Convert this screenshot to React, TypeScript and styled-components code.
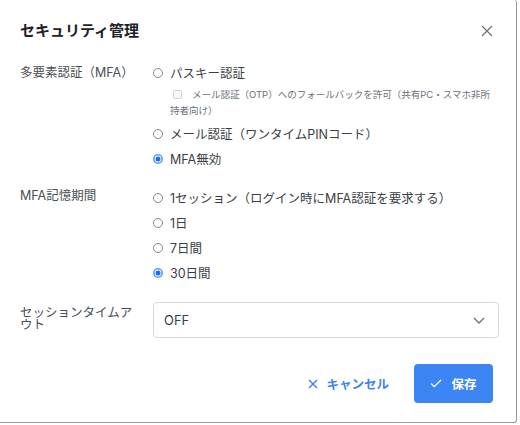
import React, { useState } from 'react'
import styled, { createGlobalStyle } from 'styled-components'

const Colors = {
  title: '#1f2328',
  label: '#4a4f57',
  text: '#3a3f47',
  muted: '#6b7079',
  primary: '#3d85f5',
  border: '#d6d9de',
  frame: '#9a9a9a'
}

const FontStack = `'Inter', 'Noto Sans CJK JP', sans-serif`

const GlobalStyle = createGlobalStyle`
  html, body {
    margin: 0;
    padding: 0;
    background: #ffffff;
  }
  body {
    font-family: ${FontStack};
    -webkit-font-smoothing: antialiased;
  }
`

const Modal = styled.div`
  box-sizing: border-box;
  width: 517px;
  height: 423px;
  padding: 20px 17px 19px 20px;
  background: #fff;
  border-right: 1px solid ${Colors.frame};
  border-bottom: 1px solid ${Colors.frame};
  border-bottom-right-radius: 3px;
  border-top-right-radius: 3px;
  display: flex;
  flex-direction: column;
`

const Header = styled.div`
  display: flex;
  align-items: center;
  justify-content: space-between;
  padding-right: 6px;
  height: 22px;
`

const Title = styled.h2`
  margin: 0;
  font-size: 15px;
  font-weight: 700;
  color: ${Colors.title};
  line-height: 22px;
`

const CloseButton = styled.button`
  border: 0;
  background: none;
  padding: 0;
  width: 12px;
  height: 12px;
  display: flex;
  color: ${Colors.muted};
  cursor: pointer;
`

const Section = styled.div<{ $top: number }>`
  display: grid;
  grid-template-columns: 133px 1fr;
  margin-top: ${(p) => p.$top}px;
`

const FieldLabel = styled.div<{ $tight?: boolean }>`
  box-sizing: border-box;
  padding-right: 15px;
  font-size: 12.5px;
  color: ${Colors.label};
  line-height: ${(p) => (p.$tight ? '11.5px' : '25px')};
`

const RadioGroup = styled.div<{ $pad?: number }>`
  display: flex;
  flex-direction: column;
  padding-top: ${(p) => p.$pad || 0}px;
`

const RadioRow = styled.label`
  display: flex;
  align-items: center;
  height: 25px;
  gap: 7px;
  font-size: 12.5px;
  color: ${Colors.text};
  cursor: pointer;
`

const RadioMark = styled.span`
  width: 10px;
  height: 10px;
  display: flex;
  flex: none;
`

const SubOption = styled.label`
  display: block;
  padding: 0 0 0 17px;
  font-size: 9.5px;
  line-height: 16px;
  color: ${Colors.muted};
  margin: 2px 0;
`

const CheckBox = styled.span`
  display: inline-block;
  box-sizing: border-box;
  width: 9px;
  height: 9px;
  border: 1px solid #cfd2d6;
  border-radius: 1.5px;
  background: #f7f7f8;
  margin: 0 10px 0 3px;
  vertical-align: -1px;
`

const SelectBox = styled.div`
  box-sizing: border-box;
  height: 36px;
  margin-top: 17px;
  border: 1px solid ${Colors.border};
  border-radius: 4px;
  display: flex;
  align-items: center;
  justify-content: space-between;
  padding: 0 13px 0 10px;
  font-size: 13px;
  color: ${Colors.text};
`

const SessionLabel = styled(FieldLabel)`
  padding-top: 22px;
`

const Footer = styled.div`
  display: flex;
  justify-content: flex-end;
  align-items: center;
  gap: 25px;
  margin-top: 26px;
  padding-right: 6px;
`

const TextButton = styled.button`
  border: 0;
  background: none;
  display: flex;
  align-items: center;
  gap: 8px;
  padding: 0;
  font-family: ${FontStack};
  font-size: 12.5px;
  font-weight: 700;
  color: ${Colors.primary};
  cursor: pointer;
`

const PrimaryButton = styled.button`
  border: 0;
  width: 79px;
  height: 39px;
  border-radius: 4px;
  background: ${Colors.primary};
  color: #fff;
  display: flex;
  align-items: center;
  justify-content: center;
  gap: 9px;
  font-family: ${FontStack};
  font-size: 12.5px;
  font-weight: 700;
  cursor: pointer;
`

const Radio = ({ checked }: { checked: boolean }) => (
  <RadioMark>
    <svg width='10' height='10' viewBox='0 0 10 10'>
      {checked ? (
        <>
          <circle cx='5' cy='5' r='5' fill='#5a9af7' />
          <circle cx='5' cy='5' r='3.4' fill='#ffffff' />
          <circle cx='5' cy='5' r='2.5' fill='#1f6ef0' />
        </>
      ) : (
        <circle cx='5' cy='5' r='4.5' fill='#fff' stroke='#7a7d82' strokeWidth='0.9' />
      )}
    </svg>
  </RadioMark>
)

const mfaOptions = [
  { id: 'passkey', label: 'パスキー認証' },
  { id: 'email', label: 'メール認証（ワンタイムPINコード）' },
  { id: 'off', label: 'MFA無効' }
]

const rememberOptions = [
  { id: 'session', label: '1セッション（ログイン時にMFA認証を要求する）' },
  { id: '1d', label: '1日' },
  { id: '7d', label: '7日間' },
  { id: '30d', label: '30日間' }
]

export default function App() {
  const [mfa, setMfa] = useState('off')
  const [remember, setRemember] = useState('30d')

  return (
    <>
      <GlobalStyle />
      <Modal>
        <Header>
          <Title>セキュリティ管理</Title>
          <CloseButton aria-label='close'>
            <svg width='12' height='12' viewBox='0 0 12 12'>
              <path d='M1 1L11 11M11 1L1 11' stroke='currentColor' strokeWidth='1.2' />
            </svg>
          </CloseButton>
        </Header>

        <Section $top={18}>
          <FieldLabel>多要素認証（MFA）</FieldLabel>
          <RadioGroup>
            {mfaOptions.map((o) => (
              <React.Fragment key={o.id}>
                <RadioRow onClick={() => setMfa(o.id)}>
                  <Radio checked={mfa === o.id} />
                  {o.label}
                </RadioRow>
                {o.id === 'passkey' && (
                  <SubOption>
                    <CheckBox />
                    メール認証（OTP）へのフォールバックを許可（共有PC・スマホ非所持者向け）
                  </SubOption>
                )}
              </React.Fragment>
            ))}
          </RadioGroup>
        </Section>

        <Section $top={12}>
          <FieldLabel>MFA記憶期間</FieldLabel>
          <RadioGroup $pad={2}>
            {rememberOptions.map((o) => (
              <RadioRow key={o.id} onClick={() => setRemember(o.id)}>
                <Radio checked={remember === o.id} />
                {o.label}
              </RadioRow>
            ))}
          </RadioGroup>
        </Section>

        <Section $top={0}>
          <SessionLabel $tight>セッションタイムアウト</SessionLabel>
          <SelectBox>
            <span>OFF</span>
            <svg width='12' height='7' viewBox='0 0 12 7'>
              <path d='M1 1L6 6L11 1' fill='none' stroke='#6b7079' strokeWidth='1.3' />
            </svg>
          </SelectBox>
        </Section>

        <Footer>
          <TextButton>
            <svg width='10' height='10' viewBox='0 0 10 10'>
              <path d='M1 1L9 9M9 1L1 9' stroke='currentColor' strokeWidth='1.5' />
            </svg>
            キャンセル
          </TextButton>
          <PrimaryButton>
            <svg width='12' height='9' viewBox='0 0 12 9'>
              <path d='M1 4.5L4.2 7.6L11 1' fill='none' stroke='#fff' strokeWidth='1.3' />
            </svg>
            保存
          </PrimaryButton>
        </Footer>
      </Modal>
    </>
  )
}
